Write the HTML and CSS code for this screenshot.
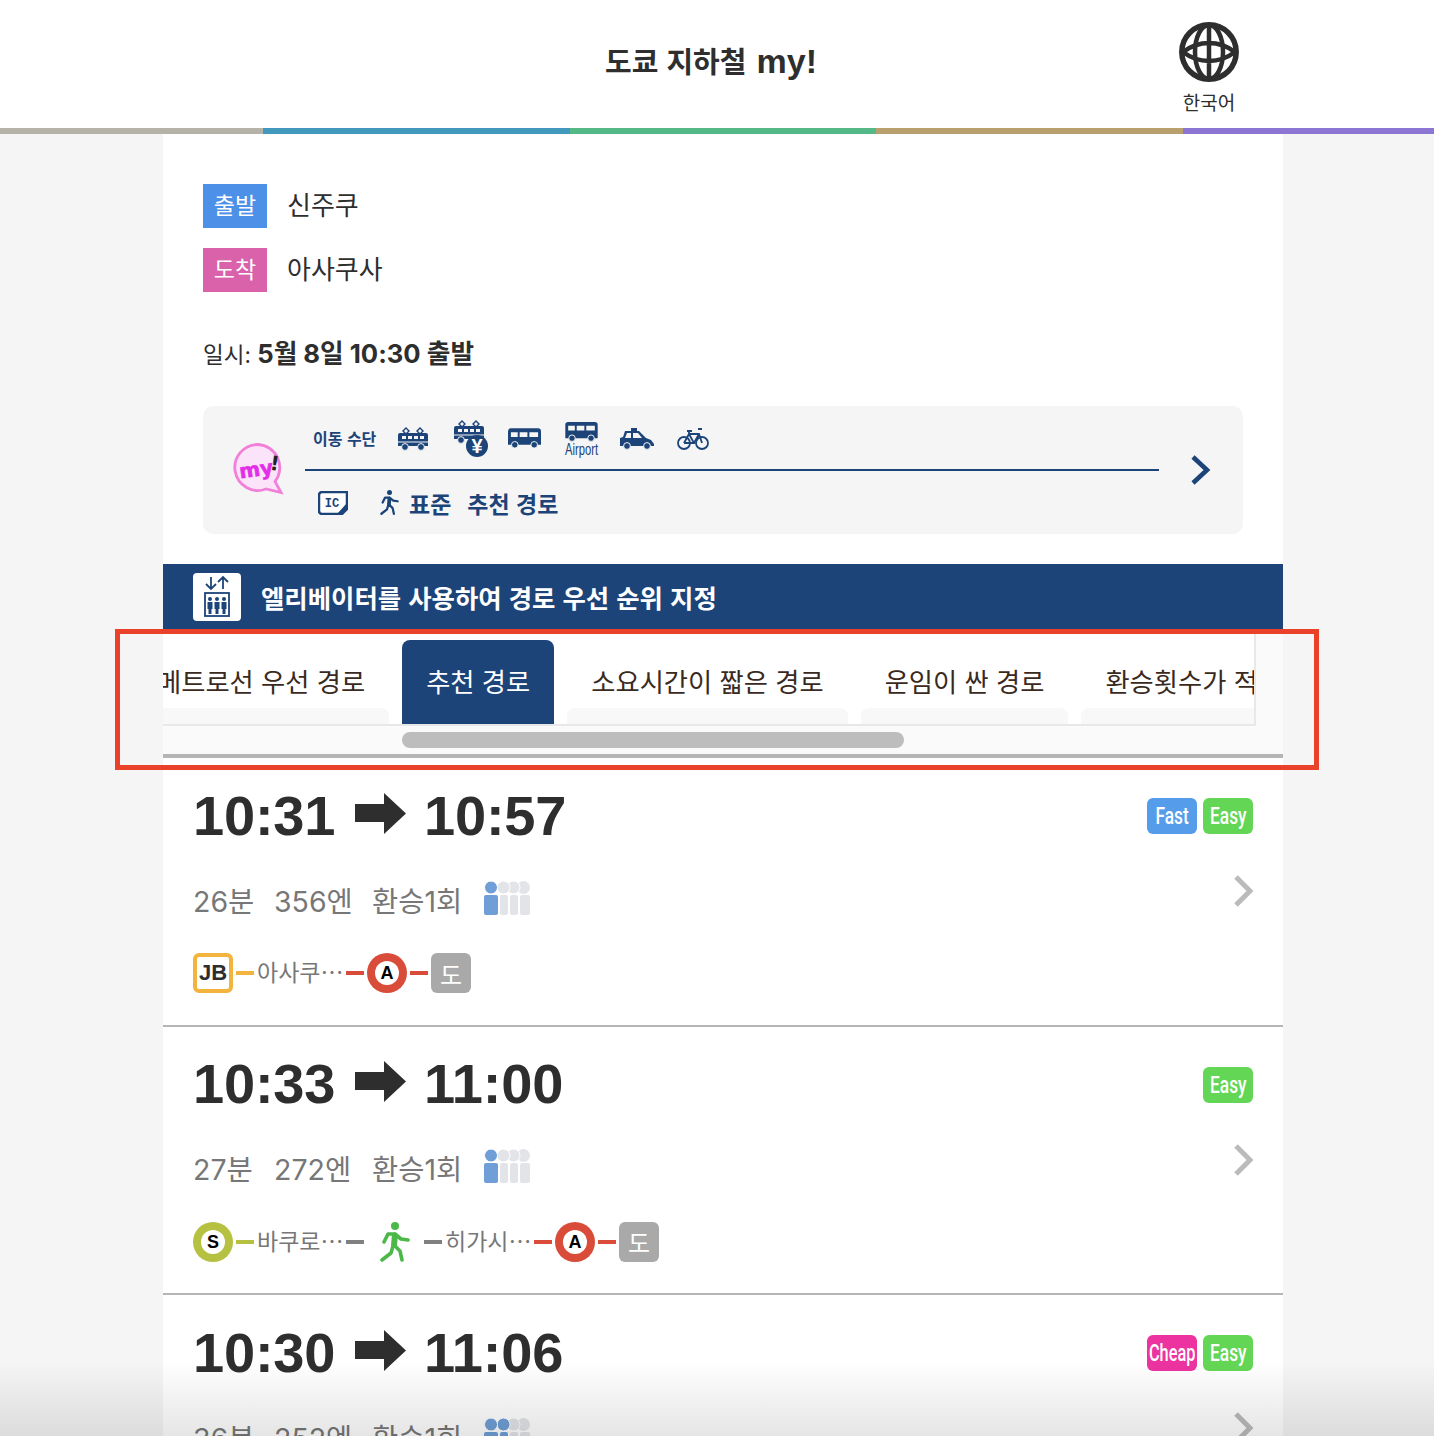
FILE: index.html
```html
<!DOCTYPE html>
<html lang="ko">
<head>
    <meta charset="UTF-8">
    <meta name="viewport" content="width=device-width, initial-scale=1.0">
    <title>도쿄 지하철 my!</title>
    <link rel="stylesheet" href="styles.css">
</head>
<body>
    <svg class="defs" width="0" height="0">
        <symbol id="i-tram" viewBox="0 0 30 24">
            <path d="M8 1l3 3-3 3-3-3zM22 1l3 3-3 3-3-3z" fill="none" stroke="currentColor" stroke-width="1.4"/>
            <path d="M2 6h26a2 2 0 0 1 2 2v11H0V8a2 2 0 0 1 2-2z" fill="currentColor"/>
            <path d="M4 9h4v3H4zM10 9h4v3h-4zM16 9h4v3h-4zM22 9h4v3h-4z" fill="#f5f5f5"/>
            <path d="M0 15h30" stroke="#f5f5f5"/>
            <circle cx="7" cy="20" r="3.4" fill="currentColor" stroke="#f5f5f5"/>
            <circle cx="23" cy="20" r="3.4" fill="currentColor" stroke="#f5f5f5"/>
        </symbol>
        <symbol id="i-bus" viewBox="0 0 34 21">
            <path d="M3 0h28a3 3 0 0 1 3 3v14H0V3a3 3 0 0 1 3-3z" fill="currentColor"/>
            <path d="M3 4h7v5H3zM12 4h8v5h-8zM22 4h9v5h-9z" fill="#f5f5f5"/>
            <circle cx="7" cy="17" r="3.4" fill="currentColor" stroke="#f5f5f5"/>
            <circle cx="27" cy="17" r="3.4" fill="currentColor" stroke="#f5f5f5"/>
        </symbol>
        <symbol id="i-walk" viewBox="0 0 30 40">
            <circle cx="15" cy="4" r="4" fill="currentColor"/>
            <path d="M15 12l-1 12" fill="none" stroke="currentColor" stroke-width="6"/>
            <path d="M14 12H8l-4 8M15 12l6 5 7 1M13 24l-2 7-9 7M15 24l5 5 2 9" fill="none" stroke="currentColor" stroke-width="3.6" stroke-linecap="round" stroke-linejoin="round"/>
        </symbol>
        <symbol id="i-people-1" viewBox="0 0 46 34">
            <g fill="#e2e4e8">
                <circle cx="39.500" cy="6.500" r="6.500"/><rect x="36" y="14" width="10" height="20" rx="2"/>
                <circle cx="29.500" cy="6.500" r="6.500" stroke="#fff"/><rect x="26" y="14" width="8" height="20" rx="2"/>
                <circle cx="19.500" cy="6.500" r="6.500" stroke="#fff"/><rect x="16" y="14" width="8" height="20" rx="2"/>
            </g>
            <g fill="#6f9fd6">
                <circle cx="7" cy="6.500" r="6.500" stroke="#fff"/><rect x="0" y="14" width="14" height="20" rx="2"/>
            </g>
        </symbol>
        <symbol id="i-people-2" viewBox="0 0 46 34">
            <g fill="#e2e4e8">
                <circle cx="39.500" cy="6.500" r="6.500"/><rect x="36" y="14" width="10" height="20" rx="2"/>
                <circle cx="29.500" cy="6.500" r="6.500" stroke="#fff"/><rect x="26" y="14" width="8" height="20" rx="2"/>
            </g>
            <g fill="#6f9fd6">
                <circle cx="19.500" cy="6.500" r="6.500" stroke="#fff"/><rect x="16" y="14" width="8" height="20" rx="2"/>
                <circle cx="7" cy="6.500" r="6.500" stroke="#fff"/><rect x="0" y="14" width="14" height="20" rx="2"/>
            </g>
        </symbol>
        <symbol id="i-arrow" viewBox="0 0 51 41">
            <path d="M0 11h29V0l22 20.500L29 41V29H0z" fill="currentColor"/>
        </symbol>
        <symbol id="i-chevron" viewBox="0 0 20 32">
            <path d="M3 2l14 14L3 30" fill="none" stroke="currentColor" stroke-width="5"/>
        </symbol>
    </svg>

    <header class="site-header">
        <h1 class="site-title">도쿄 지하철 <span class="site-title__my">my!</span></h1>
        <div class="lang">
            <svg class="lang__globe" viewBox="0 0 60 60">
                <g fill="none" stroke="#2e2e2e" stroke-width="4.500">
                    <circle cx="30" cy="30" r="27.200" stroke-width="5.500"/>
                    <ellipse cx="30" cy="30" rx="14" ry="27"/>
                    <path d="M30 3v54M4 30Q16 21 30 21T56 30M4 30Q16 39 30 39T56 30"/>
                </g>
            </svg>
            <span class="lang__name">한국어</span>
        </div>
    </header>
    <div class="line-bar">
        <i class="line-bar__a"></i><i class="line-bar__b"></i><i class="line-bar__c"></i><i class="line-bar__d"></i><i class="line-bar__e"></i>
    </div>

    <main class="content">
        <section class="search">
            <div class="place">
                <span class="place__badge place__badge--from">출발</span>
                <span class="place__name">신주쿠</span>
            </div>
            <div class="place">
                <span class="place__badge place__badge--to">도착</span>
                <span class="place__name">아사쿠사</span>
            </div>
            <p class="date">일시: <b>5월 8일 10:30 출발</b></p>

            <div class="my-panel">
                <svg class="my-panel__logo" viewBox="0 0 50 50">
                    <path d="M25 1.500a23 23 0 1 0 8 44.500l15 3.500-6-11A23 23 0 0 0 25 1.500z" fill="#fbe3fa" stroke="#f080d8" stroke-width="2.800"/>
                    <text x="6" y="33" class="my-panel__my" transform="rotate(-8 25 25)">my</text>
                    <text x="37" y="27" class="my-panel__bang" transform="rotate(8 40 22)">!</text>
                </svg>
                <div class="my-panel__body">
                    <div class="my-panel__top">
                        <span class="my-panel__label">이동 수단</span>
                        <svg class="ico ico--tram"><use href="#i-tram"/></svg>
                        <svg class="ico ico--fare" viewBox="0 0 34 37">
                            <use href="#i-tram" width="30" height="24"/>
                            <circle cx="23" cy="26" r="11" fill="#1c4479"/>
                            <text x="23" y="33" class="ico__yen">¥</text>
                        </svg>
                        <svg class="ico ico--bus"><use href="#i-bus"/></svg>
                        <svg class="ico ico--air" viewBox="0 0 33 34">
                            <use href="#i-bus" width="33" height="20"/>
                            <text x="0" y="33" class="ico__air-text" textLength="33" lengthAdjust="spacingAndGlyphs">Airport</text>
                        </svg>
                        <svg class="ico ico--taxi" viewBox="0 0 34 22">
                            <path d="M11 0h6v3h-6z" fill="currentColor"/>
                            <path d="M5 3h14l7 7 5 2 3 4v2H0v-8l3-1z" fill="currentColor"/>
                            <path d="M7 5h4v5H5zM13 5h5l4 5h-9z" fill="#f5f5f5"/>
                            <circle cx="7" cy="18" r="3.400" fill="currentColor" stroke="#f5f5f5"/>
                            <circle cx="27" cy="18" r="3.400" fill="currentColor" stroke="#f5f5f5"/>
                        </svg>
                        <svg class="ico ico--bike" viewBox="0 0 32 22">
                            <g fill="none" stroke="currentColor" stroke-width="1.800">
                                <circle cx="7" cy="15" r="6"/><circle cx="25" cy="15" r="6"/>
                                <path d="M7 15l5-9h10l3 9M12 6l5 9H7M17 15l5-9M21 1h4M10 3h5M12 3v3"/>
                            </g>
                        </svg>
                    </div>
                    <div class="my-panel__bottom">
                        <svg class="ico-ic" viewBox="0 0 30 24">
                            <path d="M4 1h25v17l-5 5H4a3 3 0 0 1-3-3V4a3 3 0 0 1 3-3z" fill="#fff" stroke="#1c4479" stroke-width="2.500"/>
                            <path d="M24 23l5-5v-6l-10 11z" fill="#1c4479"/>
                            <text x="14" y="16" class="ico-ic__text">IC</text>
                        </svg>
                        <svg class="ico-walk"><use href="#i-walk"/></svg>
                        <span class="my-panel__pref">표준</span>
                        <span class="my-panel__pref">추천 경로</span>
                    </div>
                </div>
                <svg class="my-panel__next" viewBox="0 0 21 30">
                    <path d="M3 2l14 13L3 28" fill="none" stroke="#1c4479" stroke-width="4.600"/>
                </svg>
            </div>
        </section>

        <div class="elevator">
            <span class="elevator__icon">
                <svg viewBox="0 0 48 48" width="48" height="48">
                    <g fill="none" stroke="#1c4479" stroke-width="1.800">
                        <path d="M18 4v12M13 11l5 5 5-5M30 16V4M25 9l5-5 5 5"/>
                        <rect x="12" y="20" width="24" height="23"/>
                    </g>
                    <g fill="#1c4479">
                        <circle cx="17" cy="26" r="2"/><path d="M14.500 29h5v7h-1v5h-3v-5h-1z"/>
                        <circle cx="24" cy="26" r="2"/><path d="M21.500 29h5v7h-1v5h-3v-5h-1z"/>
                        <circle cx="31" cy="26" r="2"/><path d="M28.500 29h5v7h-1v5h-3v-5h-1z"/>
                    </g>
                </svg>
            </span>
            <span class="elevator__text">엘리베이터를 사용하여 경로 우선 순위 지정</span>
        </div>

        <div class="tabs">
            <div class="tabs__scroller">
                <div class="tabs__list">
                    <a class="tab">메트로선 우선 경로</a>
                    <a class="tab tab--active">추천 경로</a>
                    <a class="tab">소요시간이 짧은 경로</a>
                    <a class="tab">운임이 싼 경로</a>
                    <a class="tab">환승횟수가 적은 경로</a>
                </div>
            </div>
            <div class="tabs__track"><span class="tabs__thumb"></span></div>
        </div>

        <ul class="results">
            <li class="result">
                <div class="result__main">
                    <div class="result__time">
                        <span class="result__from">10:31</span>
                        <svg class="result__arrow"><use href="#i-arrow"/></svg>
                        <span>10:57</span>
                    </div>
                    <div class="result__meta">
                        <span class="result__stat">26분</span>
                        <span class="result__stat">356엔</span>
                        <span class="result__stat">환승1회</span>
                        <svg class="result__people"><use href="#i-people-1"/></svg>
                    </div>
                    <div class="route">
                        <span class="stop stop--jb">JB</span>
                        <i class="route__line route__line--jb"></i>
                        <span class="route__name">아사쿠⋯</span>
                        <i class="route__line route__line--a"></i>
                        <span class="stop stop--round stop--a"><b>A</b></span>
                        <i class="route__line route__line--a"></i>
                        <span class="stop stop--end">도</span>
                    </div>
                </div>
                <div class="result__side">
                    <div class="tags">
                        <span class="tag tag--fast"><span>Fast</span></span>
                        <span class="tag tag--easy"><span>Easy</span></span>
                    </div>
                    <svg class="result__next"><use href="#i-chevron"/></svg>
                </div>
            </li>
            <li class="result">
                <div class="result__main">
                    <div class="result__time">
                        <span class="result__from">10:33</span>
                        <svg class="result__arrow"><use href="#i-arrow"/></svg>
                        <span>11:00</span>
                    </div>
                    <div class="result__meta">
                        <span class="result__stat">27분</span>
                        <span class="result__stat">272엔</span>
                        <span class="result__stat">환승1회</span>
                        <svg class="result__people"><use href="#i-people-1"/></svg>
                    </div>
                    <div class="route">
                        <span class="stop stop--round stop--s"><b>S</b></span>
                        <i class="route__line route__line--s"></i>
                        <span class="route__name">바쿠로⋯</span>
                        <i class="route__line route__line--walk"></i>
                        <svg class="route__walk"><use href="#i-walk"/></svg>
                        <i class="route__line route__line--walk"></i>
                        <span class="route__name">히가시⋯</span>
                        <i class="route__line route__line--a"></i>
                        <span class="stop stop--round stop--a"><b>A</b></span>
                        <i class="route__line route__line--a"></i>
                        <span class="stop stop--end">도</span>
                    </div>
                </div>
                <div class="result__side">
                    <div class="tags">
                        <span class="tag tag--easy"><span>Easy</span></span>
                    </div>
                    <svg class="result__next"><use href="#i-chevron"/></svg>
                </div>
            </li>
            <li class="result">
                <div class="result__main">
                    <div class="result__time">
                        <span class="result__from">10:30</span>
                        <svg class="result__arrow"><use href="#i-arrow"/></svg>
                        <span>11:06</span>
                    </div>
                    <div class="result__meta">
                        <span class="result__stat">36분</span>
                        <span class="result__stat">252엔</span>
                        <span class="result__stat">환승1회</span>
                        <svg class="result__people"><use href="#i-people-2"/></svg>
                    </div>
                </div>
                <div class="result__side">
                    <div class="tags">
                        <span class="tag tag--cheap"><span>Cheap</span></span>
                        <span class="tag tag--easy"><span>Easy</span></span>
                    </div>
                    <svg class="result__next"><use href="#i-chevron"/></svg>
                </div>
            </li>
        </ul>
    </main>

    <div class="highlight"></div>
    <div class="bottom-fade"></div>
</body>
</html>
```

FILE: styles.css
```css
* {
    box-sizing: border-box;
}
html, body {
    height: 100vh;
}
body {
    position: relative;
    margin: 0;
    overflow: hidden;
    background-color: #f5f5f5;
    color: #2e2e2e;
    font-family: "Liberation Sans", "Noto Sans CJK KR", sans-serif;
}
.defs {
    position: absolute;
}

/* header */
.site-header {
    display: flex;
    height: 128px;
    padding: 22px 195px 0 0;
    background-color: #fff;
}
.site-title {
    flex: 1;
    margin: 0;
    padding: 21px 0 0 243px;
    text-align: center;
    font-size: 29px;
    line-height: 36px;
}
.site-title__my {
    margin-left: 2px;
    font-size: 34px;
}
.lang {
    display: flex;
    flex-direction: column;
    align-items: center;
    width: 60px;
}
.lang__globe {
    width: 60px;
    height: 60px;
}
.lang__name {
    margin-top: 9px;
    font-size: 19px;
    line-height: 26px;
    white-space: nowrap;
}
.line-bar {
    display: flex;
    height: 6px;
}
.line-bar i {
    display: block;
}
.line-bar__a { width: 263px; background-color: #b5b3a8; }
.line-bar__b { width: 307px; background-color: #4398bd; }
.line-bar__c { width: 306px; background-color: #55b987; }
.line-bar__d { width: 307px; background-color: #b9a06f; }
.line-bar__e { width: 251px; background-color: #8d75d3; }

.content {
    width: 1120px;
    margin-left: 163px;
    background-color: #fff;
}

/* search conditions */
.search {
    padding: 50px 40px 30px;
}
.place {
    display: flex;
    align-items: center;
    gap: 20px;
    margin-bottom: 20px;
}
.place__badge {
    width: 64px;
    height: 44px;
    color: #fff;
    font-size: 23px;
    line-height: 44px;
    text-align: center;
}
.place__badge--from { background-color: #4d90e8; }
.place__badge--to { background-color: #d962aa; }
.place__name {
    font-size: 26px;
    line-height: 44px;
}
.date {
    margin: 42px 0 32px;
    font-family: "Inter", "Noto Sans CJK KR", sans-serif;
    font-size: 22.5px;
    line-height: 39px;
}
.date b {
    font-size: 25.7px;
}

.my-panel {
    display: flex;
    align-items: center;
    height: 128px;
    padding-left: 30px;
    border-radius: 10px;
    background-color: #f5f5f5;
    color: #1c4479;
}
.my-panel__logo {
    flex: none;
    width: 50px;
    height: 50px;
    margin-top: -4px;
    overflow: visible;
}
.my-panel__my {
    fill: #e32ee8;
    stroke: #e32ee8;
    stroke-width: 0.6px;
    font-family: "DejaVu Sans", sans-serif;
    font-size: 20px;
    font-weight: bold;
}
.my-panel__bang {
    fill: #222;
    font-family: "DejaVu Sans", sans-serif;
    font-size: 20px;
    font-weight: bold;
}
.my-panel__body {
    flex: 1;
    margin-left: 22px;
}
.my-panel__top {
    display: flex;
    align-items: center;
    height: 65px;
    padding-left: 8px;
    border-bottom: 2px solid #1c4479;
}
.my-panel__label {
    width: 64px;
    font-size: 16px;
    font-weight: bold;
    white-space: nowrap;
}
.ico {
    color: #1c4479;
    margin-top: 2px;
    overflow: visible;
}
.ico--tram { width: 30px; height: 24px; margin-left: 21px; }
.ico--fare { width: 34px; height: 37px; margin-left: 26px; }
.ico--bus { width: 33px; height: 21px; margin-left: 20px; }
.ico--air { width: 33px; height: 34px; margin-left: 24px; }
.ico--taxi { width: 34px; height: 22px; margin-left: 22px; }
.ico--bike { width: 32px; height: 22px; margin-left: 23px; }
.ico__yen {
    fill: #fff;
    font-size: 20px;
    font-weight: bold;
    text-anchor: middle;
}
.ico__air-text {
    fill: #1c4479;
    font-size: 17px;
}
.my-panel__bottom {
    display: flex;
    align-items: center;
    height: 63px;
    padding-left: 13px;
}
.ico-ic {
    width: 30px;
    height: 24px;
}
.ico-ic__text {
    fill: #1c4479;
    font-family: "Liberation Mono", monospace;
    font-size: 12px;
    font-weight: bold;
    text-anchor: middle;
}
.ico-walk {
    width: 19px;
    height: 25px;
    margin: 0 10px 0 32px;
    color: #1c4479;
}
.my-panel__pref {
    margin-right: 16px;
    font-size: 23px;
    font-weight: bold;
    white-space: nowrap;
}
.my-panel__next {
    flex: none;
    width: 21px;
    height: 30px;
    margin: 0 32px 0 31px;
}

/* elevator banner */
.elevator {
    display: flex;
    align-items: center;
    gap: 20px;
    height: 66px;
    padding-left: 30px;
    background-color: #1c4479;
}
.elevator__icon {
    width: 48px;
    height: 48px;
    border-radius: 4px;
    background-color: #fff;
}
.elevator__text {
    color: #fff;
    font-size: 25.4px;
    font-weight: bold;
}

/* route kind tabs */
.tabs {
    height: 128px;
    border-bottom: 4px solid #b5b5b5;
    background-color: #fafafa;
}
.tabs__scroller {
    width: 1093px;
    height: 96px;
    padding-top: 10px;
    overflow: hidden;
    border-right: 2px solid #e8e8e8;
    border-bottom: 2px solid #e8e8e8;
    background-color: #fff;
}
.tabs__list {
    display: flex;
    gap: 13px;
    margin-left: -30px;
}
.tab {
    position: relative;
    flex: none;
    height: 84px;
    padding: 0 24px;
    border-radius: 8px 8px 0 0;
    color: #3a2a1e;
    font-size: 26.3px;
    line-height: 87px;
    white-space: nowrap;
}
.tab::after {
    content: "";
    position: absolute;
    left: 0;
    right: 0;
    bottom: 0;
    height: 16px;
    border-radius: 8px 8px 0 0;
    background-color: #f8f8f8;
}
.tab--active {
    background-color: #1c4479;
    color: #fff;
}
.tab--active::after {
    display: none;
}
.tabs__track {
    height: 28px;
    padding: 6px 0 0 239px;
}
.tabs__thumb {
    display: block;
    width: 502px;
    height: 16px;
    border-radius: 8px;
    background-color: #bdbdbd;
}

/* results */
.results {
    margin: 0;
    padding: 0;
    list-style: none;
}
.result {
    display: flex;
    justify-content: space-between;
    height: 268.5px;
    padding: 27px 30px 0;
    border-bottom: 2px solid #b5b5b5;
}
.result__time {
    display: flex;
    align-items: center;
    height: 60px;
    font-size: 56px;
    font-weight: bold;
    letter-spacing: -0.2px;
}
.result__from {
    width: 162px;
}
.result__arrow {
    width: 51px;
    height: 41px;
    margin-top: -4px;
    margin-right: 18px;
    color: #2e2e2e;
}
.result__meta {
    display: flex;
    align-items: center;
    height: 40px;
    margin-top: 33px;
    color: #777;
    font-family: "Inter", "Noto Sans CJK KR", sans-serif;
    font-size: 28.5px;
}
.result__stat {
    padding-top: 2px;
    white-space: nowrap;
}
.result__stat:nth-child(1) { width: 81px; }
.result__stat:nth-child(2) { width: 98px; }
.result__stat:nth-child(3) { width: 112px; }
.result__people {
    width: 46px;
    height: 34px;
    margin-top: -1px;
}
.route {
    display: flex;
    align-items: center;
    gap: 3px;
    height: 40px;
    margin-top: 35px;
}
.route__line {
    width: 18px;
    height: 4px;
}
.route__line--jb { background-color: #f3b33f; }
.route__line--a { background-color: #d94c3a; }
.route__line--s { background-color: #b6c142; }
.route__line--walk { background-color: #808080; }
.route__name {
    width: 86px;
    color: #777;
    font-size: 23px;
    line-height: 34px;
    white-space: nowrap;
}
.route__walk {
    width: 30px;
    height: 40px;
    margin: 0 11px 0 13px;
    color: #4cb848;
}
.stop {
    display: flex;
    align-items: center;
    justify-content: center;
    flex: none;
    width: 40px;
    height: 40px;
}
.stop--jb {
    border: 4px solid #f3b33f;
    border-radius: 6px;
    font-size: 22px;
    font-weight: bold;
}
.stop--round {
    border-radius: 50%;
}
.stop--round b {
    width: 24px;
    height: 24px;
    border-radius: 50%;
    background-color: #fff;
    color: #000;
    font-size: 18px;
    line-height: 24px;
    text-align: center;
}
.stop--a { background-color: #d94c3a; }
.stop--s { background-color: #b6c142; }
.stop--end {
    border-radius: 6px;
    background-color: #a9a9a9;
    color: #fff;
    font-size: 24px;
}
.result__side {
    display: flex;
    flex-direction: column;
    align-items: flex-end;
    padding-top: 13px;
}
.tags {
    display: flex;
    gap: 6px;
}
.tag {
    display: flex;
    align-items: center;
    justify-content: center;
    width: 50px;
    height: 36px;
    overflow: hidden;
    border-radius: 6px;
    color: #fff;
    font-family: "Roboto", sans-serif;
    font-size: 24px;
    font-weight: 500;
}
.tag span {
    display: inline-block;
    transform: scaleX(0.72);
}
.tag--fast { background-color: #559ceb; }
.tag--easy { background-color: #64d655; }
.tag--cheap { background-color: #ec33a0; }
.tag--cheap span {
    transform: scaleX(0.68);
}
.result__next {
    width: 20px;
    height: 32px;
    margin-top: 41px;
    color: #bbb;
}

/* overlays */
.highlight {
    position: absolute;
    left: 115px;
    top: 629px;
    width: 1204px;
    height: 141px;
    border: 5px solid #e9412a;
}
.bottom-fade {
    position: absolute;
    left: 0;
    right: 0;
    bottom: 0;
    height: 76px;
    background: linear-gradient(rgba(0, 0, 0, 0), rgba(0, 0, 0, 0.1));
}
```
